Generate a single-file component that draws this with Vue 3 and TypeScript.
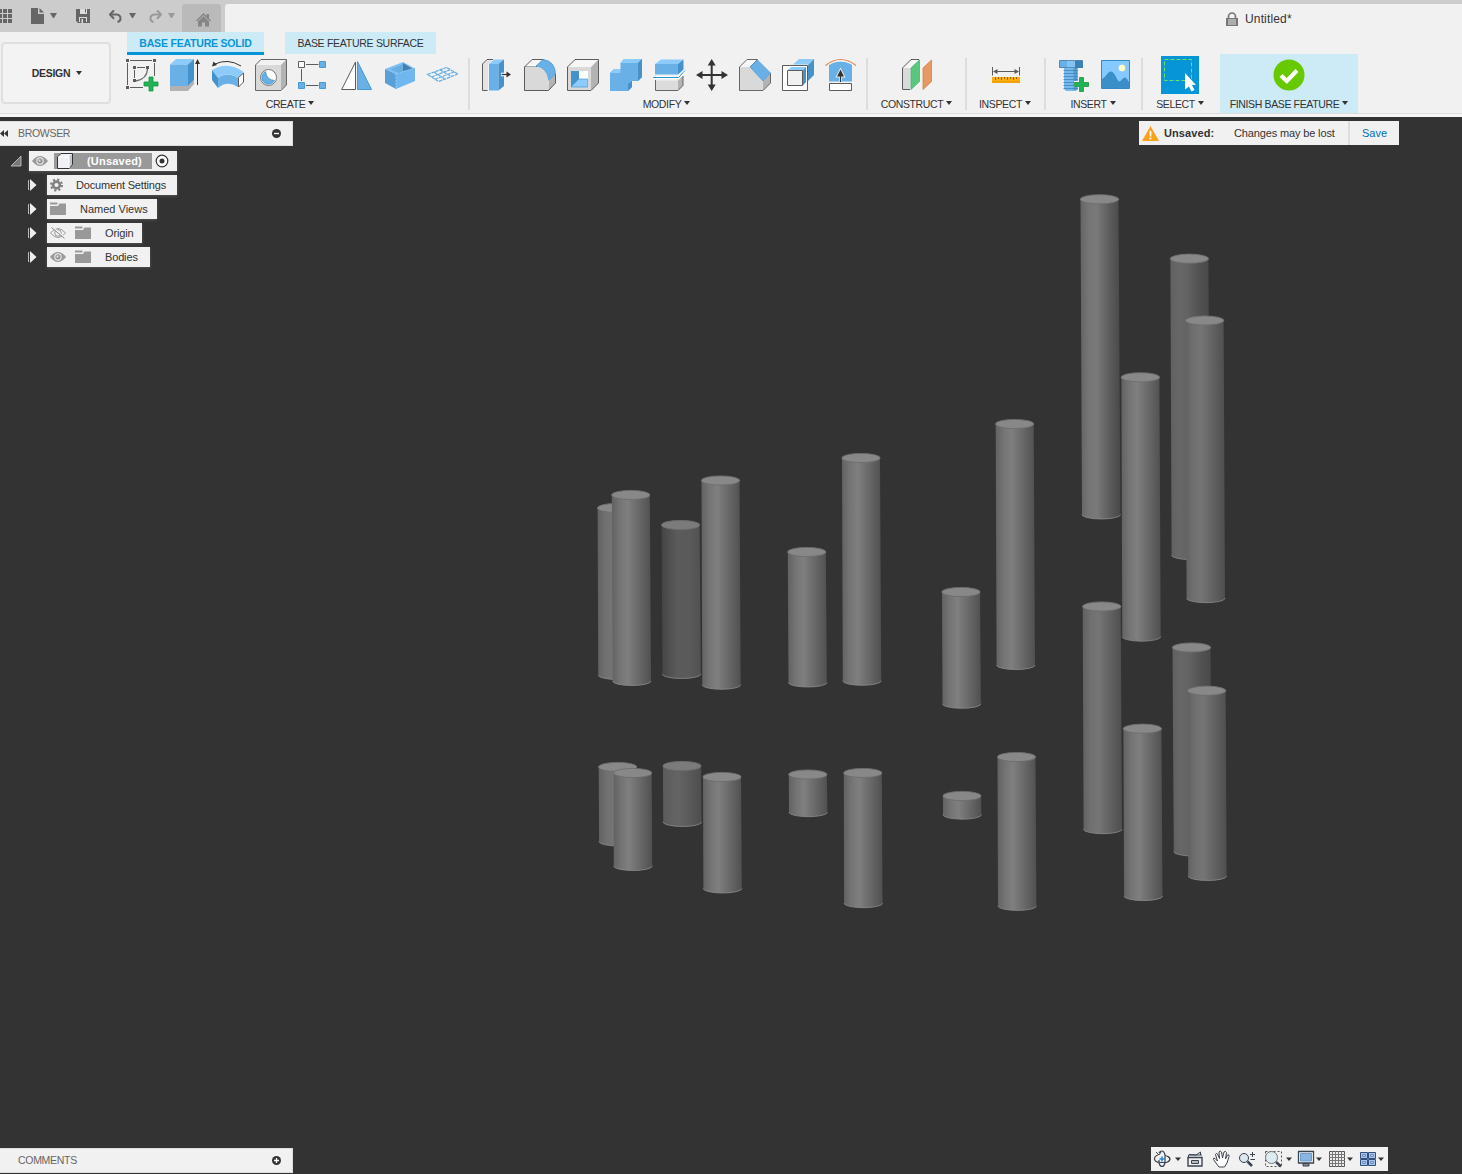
<script setup lang="ts">
interface Group {
  label: string
  cls: string
  icons: string[]
}
interface Cylinder {
  x: number
  y: number
  bx: number
  by: number
  tone: string
}
interface TreeRow {
  label: string
  cls: string
  icons: string[]
}

const plus = (x: number, y: number) =>
  `<path d="M${x - 2} ${y - 7}h4v5h5v4h-5v5h-4v-5h-5v-4h5z" fill="#22b357" stroke="#15963f" stroke-width=".8"/>`

const art: Record<string, string> = {
  sketch: `<path d="M4 1.500H26M1.500 4V26M28.500 4V17M4 28.500H17M11 8.500H19M8.500 11V19" stroke="#5c5c5c" fill="none"/><path d="M21.500 10Q21 20 10 22" stroke="#6d6d6d" fill="none" stroke-width="1.300"/><path d="M0 0h3v3H0zM27 0h3v3h-3zM0 27h3v3H0zM7 7h3v3H7zM20 7h3v3h-3zM7 20h3v3H7z" fill="#5c5c5c"/>${plus(25, 25)}`,
  extrude: `<path d="M1 27H19L25 21V25L19 32H1z" fill="#b3b1b1"/><path d="M1 5.500L7 0H25L19 5.500z" fill="#8ccbfb"/><path d="M1 5.500H19V27H1z" fill="#69b0e7"/><path d="M19 5.500L25 0V21L19 27z" fill="#4591c9"/><path d="M28.500 4V26" stroke="#333"/><path d="M28.500 0l2.500 5h-5z" fill="#333"/>`,
  revolve: `<path d="M0 11Q16 1.500 31.500 13L26 19Q15 11.500 6 19z" fill="#8ccbfb"/><path d="M0 11L6 19V29L0 21z" fill="#4591c9"/><path d="M6 19Q15 12 26 19V28Q15 21 6 29z" fill="#69b0e7"/><path d="M26.500 18.500L31.500 14V23L26.500 28z" fill="#fff" stroke="#5c5c5c"/><path d="M3 5Q16-1 29 7" fill="none" stroke="#333"/><path d="M0 7.500L1.500 2.500 5 6z" fill="#333"/>`,
  hole: `<path d="M.5 6L6 .5H31.500V26L26 31.500H.5z" fill="#d9d9d9"/><path d="M.5 6L6 .5H31.500L26 6z" fill="#f2f2f2"/><path d="M26 6L31.500 .5V26L26 31.500z" fill="#b3b3b3"/><path d="M.5 6L6 .5H31.500V26L26 31.500H.5z" fill="none" stroke="#666"/><circle cx="13.500" cy="18.500" r="8" fill="#fff" stroke="#777"/><path d="M10.500 12.500A6.700 6.700 0 1 0 19.500 21.500Q11.500 21 10.500 12.500z" fill="#69b0e7" stroke="#4591c9" stroke-width=".8"/>`,
  pattern: `<path d="M8 5.500H20.500M3.500 10V22M8 26.500H20.500" stroke="#5c5c5c"/><path d="M.5 2.500h6v6h-6z" fill="#fff" stroke="#5c5c5c"/><path d="M21.500 2.500h6v6h-6zM.5 23.500h6v6h-6zM21.500 23.500h6v6h-6z" fill="#69b0e7" stroke="#4a9ad2"/>`,
  mirror: `<path d="M.7 30.500L14.500 3V30.500z" fill="#fff" stroke="#5c5c5c"/><path d="M16.500 2.500L30.500 30.500H16.500z" fill="#69b0e7" stroke="#4a9ad2"/>`,
  box: `<path d="M1 10L19 3 31 9.500 12 15z" fill="#7ec0f4"/><path d="M6 10.500L19 5V12L15 14z" fill="#69aee0"/><path d="M19 4V12L28 9.500z" fill="#467fa8"/><path d="M1 10L12 15V30L1 24z" fill="#5aa0d6"/><path d="M12 15L31 9V22L12 30z" fill="#70b7ef"/><path d="M12 15V30" stroke="#8ccbfb" stroke-dasharray="2 1"/>`,
  grid: `<path d="M.5 15.500L19.500 8.500 31 15 11.500 22.500zM4.500 18L23 10.700M8 20.200L27 13M7 13.100L18 20M13 10.800L24.500 17.500" fill="none" stroke="#62aee5" stroke-width="1.200" stroke-dasharray="3.500 .7"/>`,
  press: `<path d="M1.500 5L6 .5H12L7 5V31.500H1.500z" fill="#e3e3e3"/><path d="M6.500 31.500H1.500V5L6 .5H12" fill="none" stroke="#5c5c5c"/><path d="M8 5L13 .5H23L18 5z" fill="#8ccbfb"/><path d="M8 5H17.500V31.500H8z" fill="#69b0e7"/><path d="M17.500 5L23 .5V27L17.500 31.500z" fill="#4591c9"/><path d="M20 15.500H26" stroke="#fff" stroke-width="3.500"/><path d="M20.500 15.500H27" stroke="#333" stroke-width="1.300"/><path d="M25.500 12.500L30 15.500 25.500 18.500z" fill="#333"/>`,
  fillet: `<path d="M.5 8L8 .5H20L12 8z" fill="#f7f7f7" stroke="#5c5c5c"/><path d="M.5 8H12Q24.500 10 24.500 24V31.500H.5z" fill="#d9d9d9"/><path d="M25 22L31.500 15V24L24.500 31.500z" fill="#b3b3b3"/><path d="M.5 8V31.500H24.500L31.500 24V15" fill="none" stroke="#5c5c5c"/><path d="M12 7L19 .5Q31 2 31.500 15L25 21.500Q23 8.500 12 7z" fill="#69b0e7" stroke="#4a9ad2" stroke-width=".8"/>`,
  shell: `<path d="M.5 8L8 .5H31.500L24 8z" fill="#f7f7f7"/><path d="M.5 8H24V31.500H.5z" fill="#d9d9d9"/><path d="M24 8L31.500 .5V24L24 31.500z" fill="#b3b3b3"/><path d="M.5 8L8 .5H31.500V24L24 31.500H.5z" fill="none" stroke="#5c5c5c"/><path d="M4 12H21V28H4z" fill="#fff"/><path d="M4 12H12V20L4 28z" fill="#4591c9"/><path d="M4 28L12 20H20.500V28z" fill="#8ccbfb" stroke="#4a9ad2" stroke-width=".7"/>`,
  combine: `<path d="M0 14L4 10H10.500V4L14 0H32V18L28 22H22V28L18 32H0z" fill="#69b0e7"/><path d="M10.500 4L14 0H32L28 4zM0 14L4 10H10.500V14z" fill="#8ccbfb"/><path d="M28 4L32 0V18L28 22zM18 25L22 22V28L18 32z" fill="#4591c9"/>`,
  split: `<path d="M2 5L8 .5H30.500L25 5z" fill="#8ccbfb"/><path d="M2 5H25V15.500H2z" fill="#69b0e7"/><path d="M25 5L30.500 .5V10.500L25 15.500z" fill="#4591c9"/><path d="M0 18.500H26L32 11.500" stroke="#fff" stroke-width="3" fill="none"/><path d="M0 18.500H25.500L32 11.500" stroke="#2a94d8" fill="none"/><path d="M2.500 21.500H25V31.500H2.500z" fill="#dcdcdc"/><path d="M25 21.500L30 17V26.500L25 31.500z" fill="#b3b3b3"/><path d="M2.500 21V31.500H25L30 26.500V17" fill="none" stroke="#666"/>`,
  move: `<path d="M15.700 5V27M5 16H27" stroke="#333" stroke-width="2"/><path d="M15.700 0l4 6.500h-8zM15.700 32l4-6.500h-8zM0 16l6.500-4v8zM32 16l-6.500-4v8z" fill="#333"/>`,
  chamfer: `<path d="M.5 8L8 .5H18.500L11 8z" fill="#f7f7f7"/><path d="M.5 8H11L24 22V31.500H.5z" fill="#d9d9d9"/><path d="M24 22L31.500 14V24L24 31.500z" fill="#b3b3b3"/><path d="M11 8L18.500 .5H8L.5 8V31.500H24L31.500 24V14" fill="none" stroke="#666"/><path d="M11 8L18.500 1 31.500 14 24 22z" fill="#69b0e7" stroke="#4a9ad2" stroke-width=".7"/>`,
  offset: `<path d="M11 5.500L17 0H32L26 5.500z" fill="#8ccbfb"/><path d="M26 6L32 0V16L26 22z" fill="#4591c9"/><path d="M.5 6.500H25.500V31.500H.5z" fill="#fff" stroke="#5c5c5c"/><path d="M6 11L9 8H24L20.500 11.500z" fill="#8ccbfb"/><path d="M20.500 11.500L24 8V23L20.500 27z" fill="#4591c9"/><path d="M5.500 11.500H20.500V26.500H5.500z" fill="#f1f1f1" stroke="#5c5c5c"/>`,
  scale: `<path d="M4 5Q15.500 0 27 5V22.500H4z" fill="#69b0e7"/><path d="M.5 7Q15.500-5.500 31 7" fill="none" stroke="#f1f1f1" stroke-width="3"/><path d="M.5 6.500Q15.500-5.500 31 6.500" fill="none" stroke="#e0894f" stroke-width="1.200"/><path d="M4.500 24.500H26.500V31.500H4.500z" fill="#fff" stroke="#5c5c5c"/><path d="M15.500 8.500l5 10h-3.500v4h-3v-4h-3.500z" fill="#f1f1f1"/><path d="M15.500 15V23" stroke="#333" stroke-width="1.300"/><path d="M15.500 10.500l3.500 7h-7z" fill="#333"/>`,
  construct: `<path d="M1.500 9L10 .5H18L9.500 9z" fill="#f7f7f7"/><path d="M1.500 9H9.500V30.500H1.500z" fill="#d9d9d9"/><path d="M9 30.500H1.500V9L10 .5H18" fill="none" stroke="#5c5c5c"/><path d="M10 9L18.500 1V22.500L10 30.500z" fill="#5ac77f" stroke="#42b96c" stroke-width=".8"/><path d="M22 9L30.500 1V22.500L22 30.500z" fill="#e59963" stroke="#d98245" stroke-width=".8"/>`,
  inspect: `<path d="M2.500 8V16.500M29.500 8V16.500M5 12.500H27" stroke="#5c5c5c"/><path d="M3 12.500l4.500-2.500v5zM29 12.500l-4.500-2.500v5z" fill="#5c5c5c"/><path d="M2 18H30V24H2z" fill="#ffad0a"/><path d="M2 23H30" stroke="#e89500"/><path d="M5.500 18v3M8.500 18v2M11.500 18v3M14.500 18v2M17.500 18v3M20.500 18v2M23.500 18v3M26.500 18v2" stroke="#8d6a1c"/>`,
  bolt: `<path d="M5 9H18.500V30L17 32H7L5 30z" fill="#76b9ec"/><path d="M14.500 9H18.500V31H14.500z" fill="#539bd0"/><path d="M4.500 11.500H19M4.500 14.500H19M4.500 17.500H19M4.500 20.500H19M4.500 23.500H19M4.500 26.500H19M4.500 29.500H19" stroke="#4085ba" stroke-width=".8"/><path d="M0 2L1.500 1H23L24 2V9H0z" fill="#69b0e7"/><path d="M8 1H16V9H8z" fill="#84c3f5"/><path d="M16 2H24V9H16z" fill="#3d82b7"/><path d="M.5 1.500H23.500V8.500H.5z" fill="none" stroke="#4779a0" stroke-width=".7"/><path d="M20 17h6v5h5v6h-5v5h-6v-5h-5v-6h5z" fill="#f1f1f1"/>${plus(22.5, 25.5)}`,
  picture: `<path d="M.5 1.500H28.500V29.500H.5z" fill="#84c9ff" stroke="#3689c8"/><path d="M1 20C6 17 7 12 10 12.500 14 13 15 20 18 22.500 21 22 22 18 24 18.500 26 19 27 22 28 23V29H1z" fill="#3b8fc9"/><circle cx="21" cy="9" r="3.200" fill="#ffffd0" stroke="#f7eeae" stroke-width=".5"/>`,
  select: `<path d="M0 0H38V38H0z" fill="#0696d7"/><path d="M3.500 3.500H30.500V24.500H3.500z" fill="none" stroke="#72df68" stroke-dasharray="4 2"/><path d="M24 17V33.500L28 30.500 30.500 35.500 33.500 34 31 29H35z" fill="#fff"/>`,
  finish: `<circle cx="19" cy="19" r="15.500" fill="#67c900"/><path d="M11 19.500L16.800 25 27 14.500" fill="none" stroke="#fff" stroke-width="4.200"/>`,
}

const groups: Group[] = [
  { label: 'CREATE', cls: 'create', icons: ['sketch', 'extrude', 'revolve', 'hole', 'pattern', 'mirror', 'box', 'grid'] },
  { label: 'MODIFY', cls: 'modify', icons: ['press', 'fillet', 'shell', 'combine', 'split', 'move', 'chamfer', 'offset', 'scale'] },
  { label: 'CONSTRUCT', cls: 'construct', icons: ['construct'] },
  { label: 'INSPECT', cls: 'inspect', icons: ['inspect'] },
  { label: 'INSERT', cls: 'insert', icons: ['bolt', 'picture'] },
  { label: 'SELECT', cls: 'select', icons: ['select'] },
  { label: 'FINISH BASE FEATURE', cls: 'finish', icons: ['finish'] },
]

const eye = `<path d="M0 8Q8-2 16 8 8 18 0 8z" fill="#999"/><circle cx="8" cy="8" r="3.700" fill="#f1f1f1"/><circle cx="8" cy="8" r="2.700" fill="#999"/><circle cx="7.500" cy="7.500" r="1" fill="#e4e4e4"/>`
const small: Record<string, string> = {
  eye,
  hidden: `<path d="M.5 8Q8-1 15.500 8 8 17 .5 8z" fill="none" stroke="#999"/><circle cx="8" cy="8" r="3.300" fill="none" stroke="#999"/><path d="M3 2.500L15 13" stroke="#f1f1f1" stroke-width="1.500"/><path d="M1.500 2.500L14.500 13.500" stroke="#888"/>`,
  folder: `<path d="M0 5H8L9.500 2.500H16V14H0z" fill="#999"/><path d="M0 1.500H7.500V3.500H0z" fill="#999"/>`,
  gear: `<circle cx="6.500" cy="8" r="3.400" fill="none" stroke="#808080" stroke-width="2.600"/><circle cx="6.500" cy="8" r="5.500" fill="none" stroke="#808080" stroke-width="2" stroke-dasharray="2.160 2.160"/>`,
}
const rows: TreeRow[] = [
  { label: 'Document Settings', cls: 'doc', icons: ['gear'] },
  { label: 'Named Views', cls: 'views', icons: ['folder'] },
  { label: 'Origin', cls: 'origin', icons: ['hidden', 'folder'] },
  { label: 'Bodies', cls: 'bodies', icons: ['eye', 'folder'] },
]

const c = (x: number, y: number, bx: number, low: number, tone = 'light'): Cylinder => ({ x, y, bx, by: low - 4.6, tone })
// Listed from the back of the scene to the front.
const cylinders: Cylinder[] = [
  c(616.6, 508, 617.5, 679.5, 'mid'),
  c(630.8, 495, 631.8, 685.5),
  c(680.6, 525, 681.6, 678.5, 'dark'),
  c(720.5, 480.5, 721.5, 689.3),
  c(806.8, 552, 807.7, 687),
  c(861, 458, 862, 685.3),
  c(617.7, 767, 618.3, 846, 'mid'),
  c(632.7, 773, 633, 870.5),
  c(682, 766, 682.4, 826.5, 'dim'),
  c(722, 777, 722.6, 893),
  c(807.8, 774.5, 808.2, 816.7),
  c(862.8, 773, 863.3, 907.7),
  c(961, 592, 961.7, 708.3),
  c(1014.7, 424, 1015.8, 669.6),
  c(1099.5, 199.3, 1101.2, 519, 'slope'),
  c(1140.4, 377.3, 1141.5, 641.2),
  c(1189.4, 258.7, 1190.8, 559.6, 'fade'),
  c(1204.6, 320.5, 1205.8, 602.7, 'mid'),
  c(1101.7, 606.5, 1102.8, 833.7, 'mid'),
  c(1142.4, 728.7, 1143.3, 900.6),
  c(1191.5, 647.5, 1193, 856, 'fade'),
  c(1206.7, 690.7, 1207.4, 880.5, 'mid'),
  c(962, 796, 962.2, 819.2),
  c(1016.5, 757, 1017.2, 910.4),
]
const body = (k: Cylinder) =>
  `M${k.x - 19} ${k.y}L${k.bx - 19.2} ${k.by}A19.2 4.6 0 0 0 ${k.bx + 19.2} ${k.by}L${k.x + 19} ${k.y}z`
const rim = (k: Cylinder) => `M${k.bx - 19.4} ${k.by}A19.4 4.6 0 0 0 ${k.bx + 19.4} ${k.by}`
const tones: Record<string, string[]> = {
  light: ['#626262', '#747474', '#7f7f7f', '#666', '#505050'],
  mid: ['#616161', '#707070', '#757575', '#606060', '#4e4e4e'],
  dim: ['#5b5b5b', '#606060', '#646464', '#585858', '#4d4d4d'],
  dark: ['#444', '#505050', '#5b5b5b', '#5a5a5a', '#515151'],
  slope: ['#646464', '#757575', '#7a7a7a', '#5d5d5d', '#484848'],
  fade: ['#606060', '#676767', '#646464', '#525252', '#484848'],
}
</script>

<template>
  <div class="app">
    <header class="titlebar">
      <div class="quick">
        <svg class="q-apps" width="13" height="16" viewBox="0 0 13 16" fill="#666"><path d="M0 1h2v4H0zM3 1h4v4H3zM8 1h4v4H8zM0 6h2v4H0zM3 6h4v4H3zM8 6h4v4H8zM0 11h2v4H0zM3 11h4v4H3zM8 11h4v4H8z" /></svg>
        <svg class="q-file" width="13" height="16" fill="#666"><path d="M0 0H7V6H13V16H0zM8.500 0L13 4.500H8.500z" /></svg>
        <i class="arrow a-file"></i>
        <svg class="q-save" width="14" height="14"><path d="M0 0H14V14H2L0 12z" fill="#666" /><path d="M3 0H4V5H11V0H10V3.500H9V0zM3 13V8H11V13H10V9H4V13z" fill="#ddd" /><path d="M5.500 10H7V14H5.500z" fill="#ddd" /></svg>
        <svg class="q-undo" width="13" height="13"><path d="M1.500 4.500H7.500Q11.800 5 11.500 9 11 11.500 8.500 12" fill="none" stroke="#666" stroke-width="2" /><path d="M5 .3L1 4.500 5 8.700" fill="none" stroke="#666" stroke-width="2" /></svg>
        <i class="arrow a-undo"></i>
        <svg class="q-redo" width="13" height="13"><path d="M11.500 4.500H5.500Q1.200 5 1.500 9 2 11.500 4.500 12" fill="none" stroke="#999" stroke-width="2" /><path d="M8 .3L12 4.500 8 8.700" fill="none" stroke="#999" stroke-width="2" /></svg>
        <i class="arrow pale a-redo"></i>
      </div>
      <div class="home"><svg width="15" height="14" fill="#858585"><path d="M7.500 0L10.500 3V1H13V5.500L15 7.500 14 8.500 7.500 2 1 8.500 0 7.500z" /><path d="M7.500 3L13 8.500V13.500H9V9.500H6V13.500H2V8.500z" /></svg></div>
      <div class="document">
        <svg width="12" height="15"><path d="M2.500 6V4.500A3.500 3.500 0 0 1 9.500 4.500V6" fill="none" stroke="#777" stroke-width="1.700" /><path d="M0 6H12V14H0z" fill="#777" /><path d="M2 8H10M2 10H10M2 12H10" stroke="#f1f1f1" stroke-width=".9" /></svg>
        <span>Untitled*</span>
      </div>
    </header>

    <section class="ribbon">
      <div class="workspace"><button class="design"><span>DESIGN</span><i class="arrow"></i></button></div>
      <div class="tools">
        <nav class="tabs">
          <span class="tab active"><b>BASE FEATURE SOLID</b></span>
          <span class="tab surface"><em>BASE FEATURE SURFACE</em></span>
        </nav>
        <div class="groups">
          <div v-for="g in groups" :key="g.label" class="group" :class="g.cls">
            <div class="icons">
              <svg v-for="i in g.icons" :key="i" :class="'i-' + i" v-html="art[i]"></svg>
            </div>
            <div class="label"><span>{{ g.label }}</span><i class="arrow"></i></div>
          </div>
        </div>
      </div>
    </section>

    <main class="viewport">
      <svg class="scene" width="1462" height="1057" viewBox="0 117 1462 1057">
        <defs>
          <linearGradient v-for="(t, name) in tones" :id="'tone-' + name" :key="name">
            <stop offset="0" :stop-color="t[0]" />
            <stop offset=".2" :stop-color="t[1]" />
            <stop offset=".4" :stop-color="t[2]" />
            <stop offset=".72" :stop-color="t[3]" />
            <stop offset="1" :stop-color="t[4]" />
          </linearGradient>
        </defs>
        <g v-for="(k, n) in cylinders" :key="n">
          <path :d="body(k)" :fill="`url(#tone-${k.tone})`" />
          <path :d="rim(k)" fill="none" stroke="#8c8c8c" stroke-width=".8" />
          <ellipse :cx="k.x" :cy="k.y" rx="19.2" ry="4.6" :fill="k.tone === 'dark' || k.tone === 'dim' ? '#7b7b7b' : '#888'" stroke="#6d6d6d" stroke-width=".9" />
        </g>
      </svg>

      <div class="browser-bar">
        <svg width="8" height="8" fill="#333"><path d="M4 0V7L0 3.500zM8 0V7L4 3.500z" /></svg>
        <span>BROWSER</span>
        <svg class="toggle" width="9" height="9"><circle cx="4.500" cy="4.500" r="4.500" fill="#333" /><path d="M2 4.500H7" stroke="#fff" stroke-width="1.400" /></svg>
      </div>
      <div class="tree">
        <div class="row root">
          <svg class="corner" width="12" height="12"><path d="M11 1V11H1z" fill="#777" stroke="#ccc" stroke-width=".8" /></svg>
          <div class="chip">
            <svg class="ic" width="16" height="16" v-html="eye"></svg>
            <span class="name">
              <svg width="16" height="16"><path d="M.5 4L4 .5H15.500V11.500L12 15.500H.5z" fill="#eef0f3" stroke="#333" /><path d="M12 4L15 1V11.500L12 15z" fill="#c3c7cf" /><path d="M1 4H12V15" fill="none" stroke="#fff" /></svg>
              <b>(Unsaved)</b>
            </span>
            <svg class="radio" width="14" height="14"><circle cx="7" cy="7" r="5.800" fill="#fff" stroke="#333" stroke-width="1.200" /><circle cx="7" cy="7" r="2.500" fill="#333" /></svg>
          </div>
        </div>
        <div v-for="r in rows" :key="r.label" class="row" :class="r.cls">
          <svg class="expand" width="9" height="12"><path d="M.5 1V11" stroke="#bbb" /><path d="M2 0L8.500 6 2 12z" fill="#eee" /></svg>
          <div class="chip">
            <svg v-for="i in r.icons" :key="i" class="ic" width="16" height="16" v-html="small[i]"></svg>
            <span class="text">{{ r.label }}</span>
          </div>
        </div>
      </div>

      <div class="notice">
        <svg width="17" height="15"><path d="M8.500 0L17 15H0z" fill="#faa21b" /><path d="M8.500 5V10.500M8.500 11.800V13.500" stroke="#fff" stroke-width="1.800" /></svg>
        <b>Unsaved:</b><span class="msg">Changes may be lost</span><a>Save</a>
      </div>

      <div class="comments">
        <span>COMMENTS</span>
        <svg class="toggle" width="9" height="9"><circle cx="4.500" cy="4.500" r="4.500" fill="#333" /><path d="M2 4.500H7M4.500 2V7" stroke="#fff" stroke-width="1.300" /></svg>
      </div>

      <div class="navbar">
        <svg width="237" height="24" viewBox="0 0 237 24" fill="none" stroke="#3b4250">
          <path d="M8 6Q9 4 11 4T14 8V16Q13 19.500 11 19.500T8 16V13M7 8Q3.500 9 3.500 12T9 15.500H15Q19 14.500 19 12T14 8.500" stroke-width="1.200" /><path d="M5 5L8 8 10 5M16 9L19 12 17 15" /><path d="M11 9.500V14.500M8.500 12H13.500" stroke="#2485d2" stroke-width="1.500" />
          <path d="M37 10.500H51V19H37z" stroke-width="1.400" /><path d="M37.500 10V8H51M38 7.500L45 8 49.500 5V8" /><path d="M40.500 13.500H47.500V16.500H40.500z" fill="#bbb" />
          <path d="M68 20L65 16 62.500 12.500Q62 10.500 64 11.500L66.500 14 64.500 7.500Q65 5.500 66.500 7L68.500 11.500 68 5Q69 3 70.500 5L71.500 11 73 5Q74.500 3.500 75.500 5.500L74.500 12 76.500 8Q78.500 7 78 9.500L76 16 73.500 20z" fill="#fff" />
          <circle cx="93" cy="11" r="4.500" fill="#dce7ef" /><path d="M96.500 14.500L101 19" stroke-width="2.500" /><path d="M101.500 5V10M99 7.500H104M99.500 12.500H104" />
          <path d="M114.500 4.500H130.500V19.500H114.500z" stroke="#555" stroke-dasharray="2 2" /><circle cx="120.500" cy="10.500" r="6" fill="#dcecf0" stroke="#777" /><path d="M125 15L130 19.500" stroke-width="2.500" />
          <path d="M147.500 4.500H162.500V16H147.500z" fill="#fff" stroke-width="1.300" /><path d="M149.500 6.500H160.500V14H149.500z" fill="#88b5e3" stroke="#6e9cca" /><path d="M152 16.500H158V19H152z" fill="#888" />
          <path d="M178.500 4.500H193.500V19.500H178.500z" fill="#eee" stroke="#555" /><path d="M178 7.500H194M178 10.500H194M178 13.500H194M178 16.500H194M181.500 4V20M184.500 4V20M187.500 4V20M190.500 4V20" stroke="#777" />
          <path d="M209.500 5.500H216.500V11.500H209.500zM217.500 5.500H224.500V11.500H217.500zM209.500 12.500H216.500V18.500H209.500zM217.500 12.500H224.500V18.500H217.500z" fill="#a9c7ec" stroke="#324f7c" /><path d="M211.500 7.500H214.500V9.500H211.500zM219.500 7.500H222.500V9.500H219.500zM211.500 14.500H214.500V16.500H211.500zM219.500 14.500H222.500V16.500H219.500z" stroke="#6f90c0" />
          <path d="M24 10.500h6l-3 3.500zM135 10.500h6l-3 3.500zM165 10.500h6l-3 3.500zM196 10.500h6l-3 3.500zM227 10.500h6l-3 3.500z" fill="#333" stroke="none" />
        </svg>
      </div>
    </main>
  </div>
</template>

<style>
html, body { margin: 0; background: #333; overflow: hidden; }
</style>

<style scoped>
.app { width: 1462px; height: 1174px; display: flex; flex-direction: column; overflow: hidden; background: #333; color: #333; font: 11px/14px "Liberation Sans", Arial, sans-serif; }
svg { display: block; flex: none; }
span, b, em { white-space: nowrap; }
em { font-style: normal; }
.arrow { flex: none; width: 0; height: 0; border: 3px solid transparent; border-top: 4px solid #333; border-bottom: 0; }

.titlebar { height: 32px; flex: none; display: flex; background: #ccc; }
.quick { width: 182px; display: flex; align-items: flex-start; }
.quick .arrow { width: 1px; margin-top: 13px; border-width: 5px 3px 0; border-top-color: #666; }
.quick .arrow.pale { border-top-color: #999; }
.q-apps { margin-top: 8px; }
.q-file { margin: 8px 0 0 18px; }
.a-file { margin-left: 6px; }
.q-save { margin: 9px 0 0 19px; }
.q-undo { margin: 10px 0 0 19px; }
.a-undo { margin-left: 7px; }
.q-redo { margin: 10px 0 0 13px; }
.a-redo { margin-left: 6px; }
.home { width: 39px; height: 28px; margin-top: 4px; background: #bababa; border-radius: 3px 3px 0 0; display: flex; align-items: flex-start; justify-content: center; }
.home svg { margin: 9px 0 0 3px; }
.document { flex: 1; margin: 4px 0 0 4px; background: #f1f1f1; border-radius: 3px 0 0 0; display: flex; align-items: flex-start; padding-left: 1001px; }
.document svg { margin-top: 8px; }
.document span { margin: 8px 0 0 7px; font-size: 12px; letter-spacing: .15px; }

.ribbon { height: 85px; flex: none; display: flex; background: linear-gradient(#f1f1f1 81px, #ddd 81px, #ddd 82px, #f5f5f5 82px); }
.workspace { width: 115px; flex: none; }
.design { display: flex; align-items: center; justify-content: center; gap: 6px; box-sizing: border-box; width: 110px; height: 62px; margin: 10px 0 0 .5px; padding: 0 0 0 3px; border: 2px solid #dfdfdf; border-radius: 4px; background: #f3f3f3; color: #333; font: bold 10.5px/14px "Liberation Sans", sans-serif; letter-spacing: -.3px; }
.tools { flex: 1; }
.tabs { height: 22px; display: flex; padding-left: 12px; }
.tab { height: 22px; box-sizing: border-box; background: #cdeaf7; display: flex; justify-content: center; padding-top: 4px; font-size: 10.5px; letter-spacing: -.28px; }
.tab.active { width: 137px; height: 23px; border-bottom: 3px solid #0696d7; color: #0696d7; letter-spacing: -.2px; }
.tab.surface { width: 151px; margin-left: 21px; }
.groups { display: flex; }
.group { height: 52px; margin-top: 4px; box-sizing: border-box; border-right: 2px solid #ddd; padding: 1px 0 0; display: flex; flex-direction: column; align-items: center; }
.icons { display: flex; gap: 11px; height: 32px; }
.icons svg { width: 32px; height: 32px; overflow: visible; }
.label { display: flex; align-items: center; gap: 3px; margin-top: 6px; height: 14px; font-size: 10.5px; letter-spacing: -.36px; }
.label .arrow { margin-top: -2px; }
.create { width: 355px; padding-left: 2px; }
.modify { width: 398px; padding-left: 2px; }
.create .label, .modify .label { margin-left: -5px; }
.construct { width: 99px; }
.inspect { width: 79px; }
.inspect .label { margin-left: -1px; }
.insert { width: 97px; padding-left: 2px; }
.insert .icons { gap: 10px; }
.insert .label { margin-left: -3px; }
.icons svg.i-picture { width: 29px; }
.select { width: 77px; border: 0; padding-right: 3px; }
.icons svg.i-select, .icons svg.i-finish { width: 38px; height: 38px; margin-top: -3px; }
.finish { width: 138px; height: 59px; margin-top: 0; padding: 5px 0 0; border: 0; background: #cdeaf7; }

.viewport { position: relative; flex: 1; }
.scene { position: absolute; left: 0; top: 0; }
.browser-bar, .comments { position: absolute; left: 0; width: 293px; height: 25px; box-sizing: border-box; background: #f1f1f1; border: 1px solid #ddd; border-left: 0; display: flex; align-items: center; color: #666; font-size: 10.5px; letter-spacing: -.3px; }
.browser-bar { top: 4px; }
.browser-bar span { margin: -1px 0 0 10px; }
.comments { bottom: 1px; }
.comments span { margin: -1px 0 0 18px; }
.toggle { margin-left: auto; margin-right: 11px; }
.tree { position: absolute; left: 0; top: 34px; display: flex; flex-direction: column; gap: 4px; }
.row { height: 20px; display: flex; align-items: center; }
.row .expand { margin: 0 10px 0 28px; }
.chip { height: 20px; box-sizing: border-box; background: #f1f1f1; display: flex; align-items: center; padding-left: 3px; box-shadow: 0 1px 3px #555; }
.corner { margin: 0 7px 0 10px; }
.root .chip { width: 148px; }
.name { display: flex; align-items: center; width: 98px; height: 16px; margin-left: 6px; background: #999; color: #fff; box-sizing: border-box; padding-left: 3px; }
.name b { margin-left: 14px; letter-spacing: .2px; }
.radio { margin-left: 3px; }
.doc .chip { width: 130px; }
.doc .text { margin-left: 10px; letter-spacing: -.17px; }
.views .chip { width: 110px; }
.views .text { margin-left: 14px; }
.origin .chip { width: 95px; }
.bodies .chip { width: 103px; }
.ic + .ic { margin-left: 9px; }
.ic + .ic + .text { margin-left: 14px; letter-spacing: -.15px; }
.notice { position: absolute; left: 1139px; top: 4px; width: 260px; height: 24px; box-sizing: border-box; background: #f1f1f1; display: flex; align-items: center; padding-left: 3px; }
.notice b { width: 50px; margin-left: 5px; letter-spacing: .1px; }
.msg { width: 102px; margin-left: 20px; letter-spacing: -.14px; }
.notice a { box-sizing: border-box; height: 24px; line-height: 24px; margin-left: 12px; padding-left: 12px; border-left: 2px solid #ddd; color: #0070b8; }
.navbar { position: absolute; left: 1151px; bottom: 3px; width: 237px; height: 24px; background: #f1f1f1; }
</style>
